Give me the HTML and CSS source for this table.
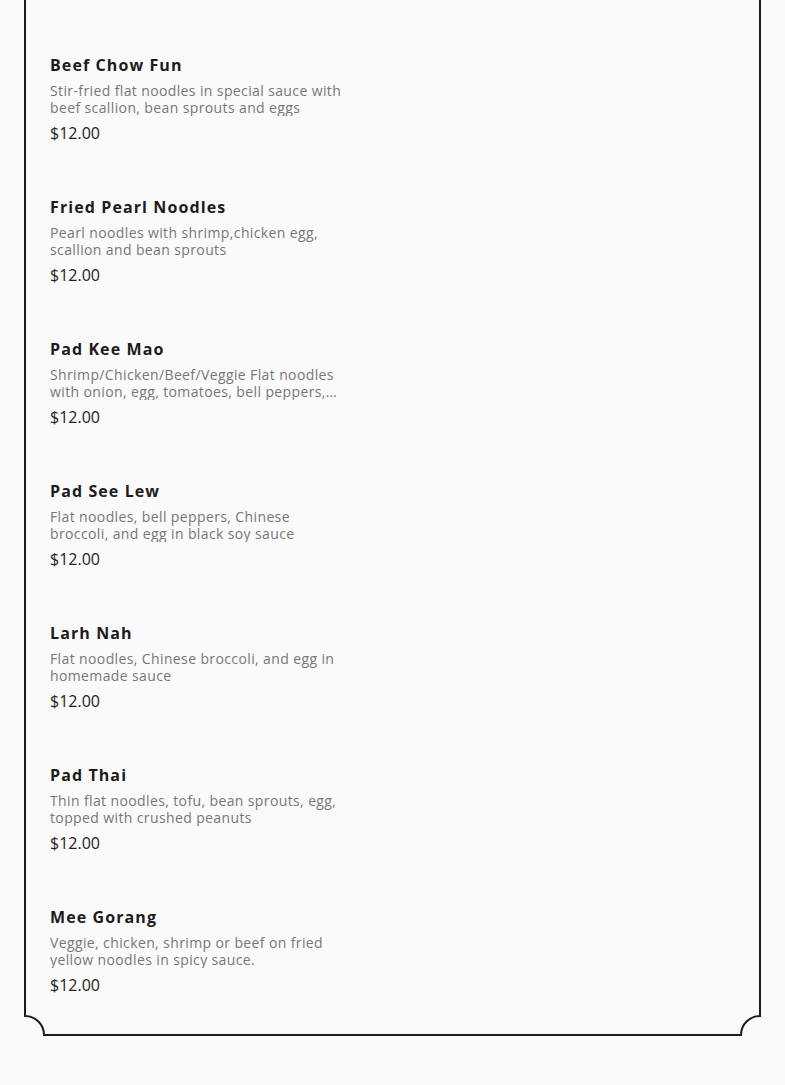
FILE: index.html
```html
<!DOCTYPE html>
<html lang="en">
<head>
    <meta charset="UTF-8">
    <meta name="viewport" content="width=device-width, initial-scale=1.0">
    <title>Noodles | Menu</title>
    <link rel="stylesheet" href="styles.css">
</head>
<body>
    <div class="page">
        <div class="menu-card">
            <div class="menu-item">
                <div class="price">$12.00</div>
            </div>
            <div class="menu-item">
                <h3>Beef Chow Fun</h3>
                <p class="desc">Stir-fried flat noodles in special sauce with beef scallion, bean sprouts and eggs</p>
                <div class="price">$12.00</div>
            </div>
            <div class="menu-item">
                <h3>Fried Pearl Noodles</h3>
                <p class="desc">Pearl noodles with shrimp,chicken egg, scallion and bean sprouts</p>
                <div class="price">$12.00</div>
            </div>
            <div class="menu-item">
                <h3>Pad Kee Mao</h3>
                <p class="desc">Shrimp/Chicken/Beef/Veggie Flat noodles with onion, egg, tomatoes, bell peppers, and basil</p>
                <div class="price">$12.00</div>
            </div>
            <div class="menu-item">
                <h3>Pad See Lew</h3>
                <p class="desc">Flat noodles, bell peppers, Chinese broccoli, and egg in black soy sauce</p>
                <div class="price">$12.00</div>
            </div>
            <div class="menu-item">
                <h3>Larh Nah</h3>
                <p class="desc">Flat noodles, Chinese broccoli, and egg in homemade sauce</p>
                <div class="price">$12.00</div>
            </div>
            <div class="menu-item">
                <h3>Pad Thai</h3>
                <p class="desc">Thin flat noodles, tofu, bean sprouts, egg, topped with crushed peanuts</p>
                <div class="price">$12.00</div>
            </div>
            <div class="menu-item">
                <h3>Mee Gorang</h3>
                <p class="desc">Veggie, chicken, shrimp or beef on fried yellow noodles in spicy sauce.</p>
                <div class="price">$12.00</div>
            </div>
        </div>
    </div>
</body>
</html>
```

FILE: styles.css
```css
body {
    font-family: 'Open Sans', 'Liberation Sans', sans-serif;
    background-color: #fafafa;
    margin: 0;
    padding: 0;
    color: #1c1c1c;
}
.page {
    padding: 0 24px 49px 24px;
}
.menu-card {
    position: relative;
    margin-top: -40px;
    padding: 19px 24px 39px 24px;
    border: 2px solid #1c1c1c;
    display: flex;
    flex-direction: column;
    gap: 54px;
}
.menu-card::before, .menu-card::after {
    content: '';
    position: absolute;
    bottom: -21px;
    width: 36px;
    height: 36px;
    border: 2px solid #1c1c1c;
    border-radius: 50%;
    background: #fafafa;
}
.menu-card::before {
    left: -21px;
    clip-path: inset(0 0 calc(50% - 1px) calc(50% - 1px));
}
.menu-card::after {
    right: -21px;
    clip-path: inset(0 calc(50% - 1px) calc(50% - 1px) 0);
}
.menu-item {
    width: 298px;
}
.menu-item h3 {
    margin: 0 0 7px 0;
    font-size: 16px;
    line-height: 20px;
    font-weight: 700;
    letter-spacing: 1.1px;
}
.desc {
    margin: 0 0 7px 0;
    font-size: 14px;
    line-height: 17px;
    letter-spacing: 0.38px;
    color: #777;
    display: -webkit-box;
    -webkit-line-clamp: 2;
    -webkit-box-orient: vertical;
    overflow: hidden;
}
.price {
    font-size: 16px;
    line-height: 20px;
    color: #222;
}
```
